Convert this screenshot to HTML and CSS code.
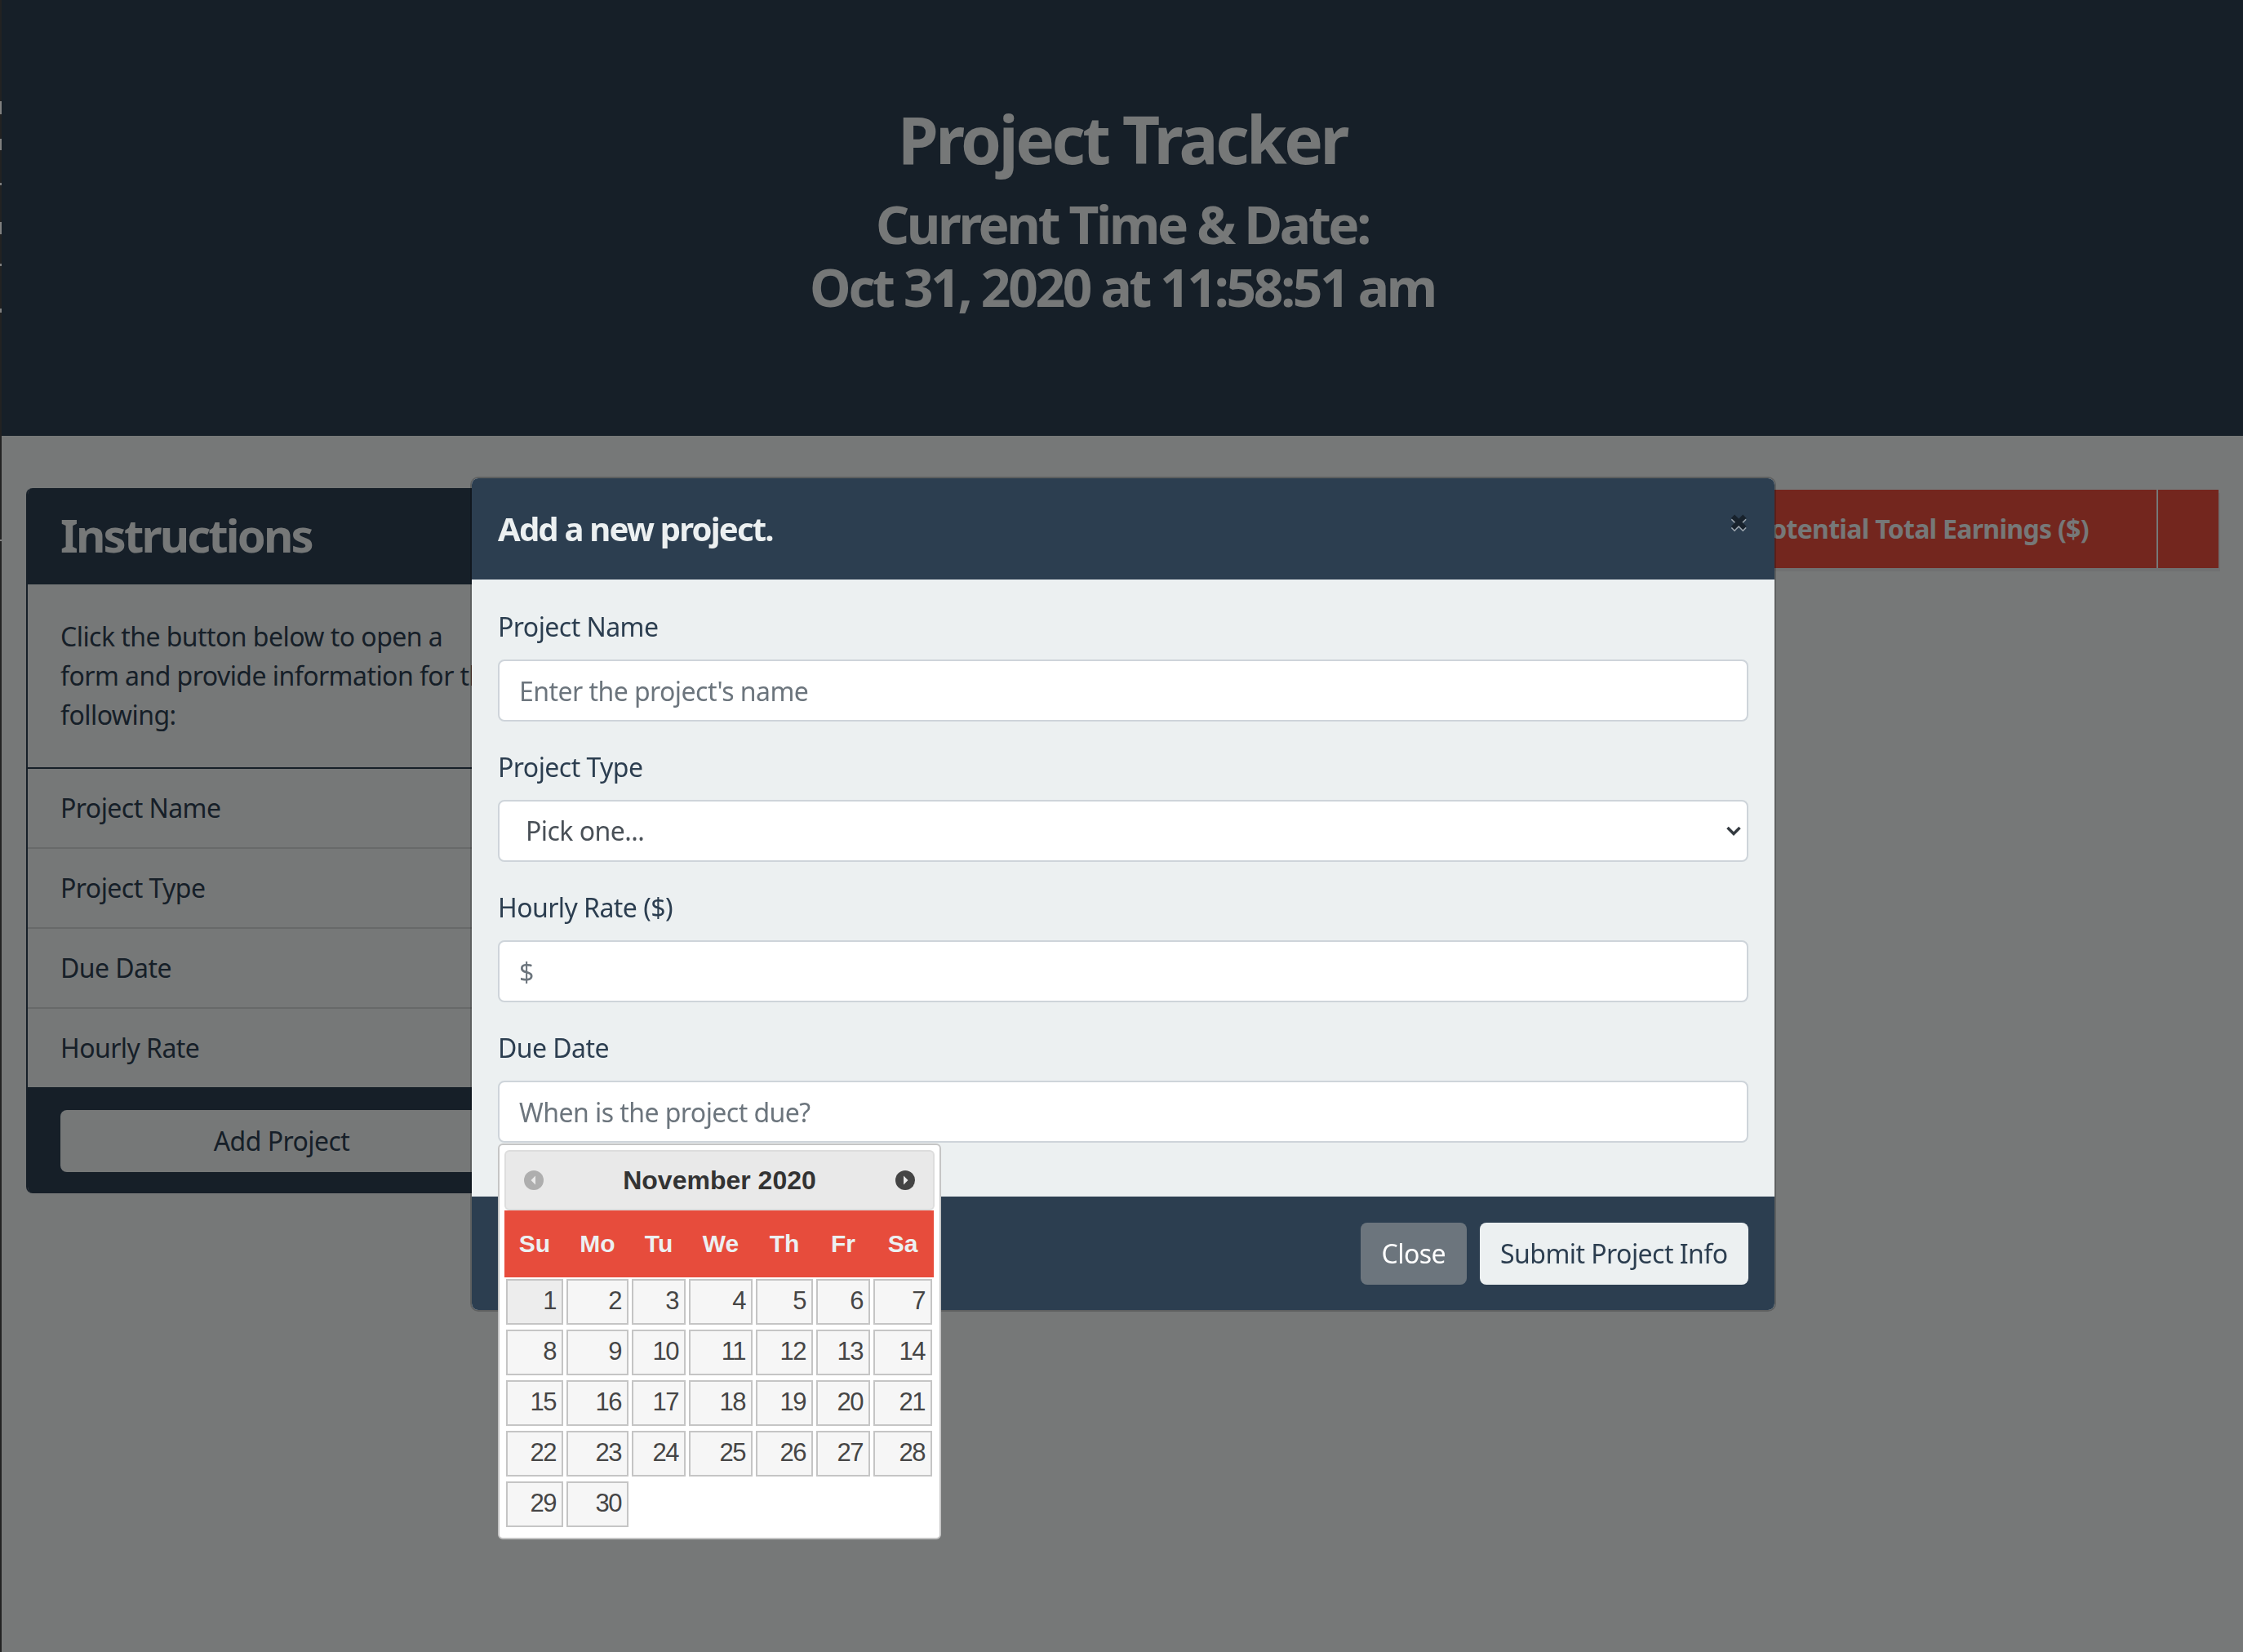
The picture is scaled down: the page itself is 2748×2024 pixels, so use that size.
FILE: index.html
```html
<!DOCTYPE html>
<html lang="en">
<head>
    <meta charset="UTF-8">
    <meta name="viewport" content="width=device-width, initial-scale=1.0">
    <title>Project Tracker</title>
    <link rel="stylesheet" href="styles.css">
</head>
<body>
    <div class="edge-strip">
        <svg width="2" height="700" viewBox="0 0 2 700">
            <rect y="124" width="2" height="16" fill="#fff"/>
            <rect y="170" width="2" height="14" fill="#fff"/>
            <rect y="224" width="2" height="3" fill="#fff"/>
            <rect y="272" width="2" height="15" fill="#fff"/>
            <rect y="323" width="2" height="3" fill="#fff"/>
            <rect y="378" width="2" height="5" fill="#fff"/>
            <rect y="661" width="2" height="2" fill="#fff"/>
        </svg>
    </div>

    <div class="page">
        <header class="banner">
            <h1>Project Tracker</h1>
            <h3>Current Time &amp; Date:<br>Oct 31, 2020 at 11:58:51 am</h3>
        </header>

        <main class="content">
            <section class="card">
                <h2 class="card-title">Instructions</h2>
                <p class="card-text">Click the button below to open a form and provide information for the following:</p>
                <ul class="card-list">
                    <li>Project Name</li>
                    <li>Project Type</li>
                    <li>Due Date</li>
                    <li>Hourly Rate</li>
                </ul>
                <div class="card-foot">
                    <button class="add-btn">Add Project</button>
                </div>
            </section>

            <table class="projects">
                <colgroup>
                    <col>
                    <col class="col-earn">
                    <col class="col-del">
                </colgroup>
                <thead>
                    <tr>
                        <th></th>
                        <th>Potential Total Earnings ($)</th>
                        <th></th>
                    </tr>
                </thead>
            </table>
        </main>
    </div>

    <div class="backdrop"></div>

    <div class="modal">
        <div class="modal-head">
            <h5>Add a new project.</h5>
            <button class="close-x">&#10006;</button>
        </div>

        <form class="modal-body">
            <div class="field">
                <label>Project Name</label>
                <input type="text" placeholder="Enter the project's name">
            </div>
            <div class="field field-select">
                <label>Project Type</label>
                <select>
                    <option>Pick one...</option>
                </select>
                <svg class="select-arrow" width="20" height="14" viewBox="0 0 20 14">
                    <path d="M2.500 3l7.500 7.500L17.500 3" fill="none" stroke="#343a40" stroke-width="3.500"/>
                </svg>
            </div>
            <div class="field">
                <label>Hourly Rate ($)</label>
                <input type="text" placeholder="$">
            </div>
            <div class="field field-date">
                <label>Due Date</label>
                <input type="text" placeholder="When is the project due?">

                <div class="datepicker">
                    <div class="dp-title">
                        <svg class="dp-arrow dp-prev" width="24" height="24" viewBox="0 0 24 24">
                            <circle cx="12" cy="12" r="12"/>
                            <path d="M14 6.500v11L8.500 12z"/>
                        </svg>
                        <span>November 2020</span>
                        <svg class="dp-arrow" width="24" height="24" viewBox="0 0 24 24">
                            <circle cx="12" cy="12" r="12"/>
                            <path d="M10 6.500v11l5.500-5.500z"/>
                        </svg>
                    </div>
                    <div class="dp-days">
                        <span>Su</span><span>Mo</span><span>Tu</span><span>We</span><span>Th</span><span>Fr</span><span>Sa</span>
                    </div>
                    <div class="dp-grid">
                        <a class="today">1</a><a>2</a><a>3</a><a>4</a><a>5</a><a>6</a><a>7</a>
                        <a>8</a><a>9</a><a>10</a><a>11</a><a>12</a><a>13</a><a>14</a>
                        <a>15</a><a>16</a><a>17</a><a>18</a><a>19</a><a>20</a><a>21</a>
                        <a>22</a><a>23</a><a>24</a><a>25</a><a>26</a><a>27</a><a>28</a>
                        <a>29</a><a>30</a>
                    </div>
                </div>
            </div>
        </form>

        <div class="modal-foot">
            <button class="btn-close">Close</button>
            <button class="btn-submit">Submit Project Info</button>
        </div>
    </div>
</body>
</html>
```

FILE: styles.css
```css
* {
    box-sizing: border-box;
}

html, body {
    height: 100%;
}

body {
    margin: 0;
    display: flex;
    background-color: #ecf0f1;
    color: #2c3e50;
    font-family: "Noto Sans", sans-serif;
    font-size: 32px;
    line-height: 48px;
    letter-spacing: -0.55px;
    overflow: hidden;
}

.edge-strip {
    width: 2px;
    flex-shrink: 0;
    background-color: #444;
}

.edge-strip svg {
    display: block;
}

.page {
    flex: 1;
    min-width: 0;
}

/* top banner */
.banner {
    height: 534px;
    padding-top: 122px;
    background-color: #2c3e50;
    color: #ecf0f1;
    text-align: center;
}

.banner h1 {
    margin: 0 0 18px;
    font-size: 80px;
    line-height: 96px;
    font-weight: 700;
    letter-spacing: -3.4px;
}

.banner h3 {
    margin: 0;
    font-size: 64px;
    line-height: 77px;
    font-weight: 700;
    letter-spacing: -3.3px;
}

.content {
    display: flex;
    align-items: flex-start;
    gap: 16px;
    padding: 64px 30px 0;
}

/* instructions card */
.card {
    width: 626px;
    flex-shrink: 0;
    border-left: 2px solid #2c3e50;
    border-radius: 8px;
    overflow: hidden;
}

.card-title {
    margin: 0 0 0 -2px;
    height: 118px;
    padding: 0 42px;
    background-color: #2c3e50;
    color: #ecf0f1;
    font-size: 56px;
    line-height: 114px;
    font-weight: 700;
    letter-spacing: -2.800px;
}

.card-text {
    margin: 0;
    padding: 40px;
    border-bottom: 2px solid #2c3e50;
}

.card-list {
    margin: 0;
    padding: 0;
    list-style: none;
}

.card-list li {
    padding: 24px 40px;
    border-bottom: 2px solid rgba(0, 0, 0, 0.125);
}

.card-list li:last-child {
    border-bottom: 0;
}

.card-foot {
    margin-left: -2px;
    padding: 28px 42px 26px;
    background-color: #2c3e50;
}

.add-btn {
    display: block;
    width: 100%;
    height: 76px;
    border: 0;
    border-radius: 8px;
    background-color: #ecf0f1;
    color: #2c3e50;
    font: inherit;
    letter-spacing: inherit;
}

/* table behind the modal */
.projects {
    flex: 1;
    table-layout: fixed;
    border-collapse: collapse;
    margin-top: 2px;
    box-shadow: 2px 4px 0 rgba(0, 0, 0, 0.05);
}

.col-earn {
    width: 516px;
}

.col-del {
    width: 75px;
}

.projects th {
    height: 96px;
    padding: 0 22px;
    background-color: #e74c3c;
    color: #ecf0f1;
    font-size: 32px;
    font-weight: 700;
    text-align: left;
    white-space: nowrap;
    overflow: hidden;
    letter-spacing: -0.700px;
    border-right: 2px solid #ecf0f1;
}

.projects th:last-child {
    border-right: 0;
}

/* modal */
.backdrop {
    position: fixed;
    inset: 0;
    background-color: rgba(0, 0, 0, 0.5);
}

.modal {
    position: fixed;
    top: 584px;
    left: 576px;
    width: 1600px;
    border: 2px solid rgba(0, 0, 0, 0.2);
    border-radius: 10px;
    background-clip: padding-box;
    background-color: #ecf0f1;
}

.modal-head {
    display: flex;
    align-items: center;
    justify-content: space-between;
    height: 124px;
    padding: 0 32px 0 32px;
    background-color: #2c3e50;
    border-radius: 8px 8px 0 0;
}

.modal-head h5 {
    margin: 0;
    color: #ecf0f1;
    font-size: 40px;
    line-height: 48px;
    font-weight: 700;
    letter-spacing: -1.800px;
}

.close-x {
    margin-top: -14px;
    padding: 0;
    border: 0;
    background: none;
    color: #18222c;
    font-family: "DejaVu Sans", sans-serif;
    font-size: 28px;
    line-height: 32px;
    text-shadow: 0 2px 0 rgba(236, 240, 241, 0.6);
}

.modal-body {
    padding: 34px 32px;
}

.field {
    position: relative;
    margin-bottom: 32px;
}

.field label {
    display: block;
    margin-bottom: 16px;
}

.field input,
.field select {
    display: block;
    width: 100%;
    height: 76px;
    padding: 0 24px;
    border: 2px solid #ced4da;
    border-radius: 8px;
    background-color: #fff;
    color: #495057;
    font: inherit;
    letter-spacing: inherit;
}

.field select {
    padding-left: 32px;
    appearance: none;
}

.select-arrow {
    position: absolute;
    right: 8px;
    bottom: 31px;
}

.field input::placeholder {
    color: #6c757d;
    opacity: 1;
}

/* date picker popup */
.datepicker {
    position: absolute;
    top: 100%;
    left: 0;
    margin-top: 1px;
    width: 543px;
    height: 485px;
    padding: 6px 6px 14px;
    border: 2px solid #c5c5c5;
    border-radius: 6px;
    background-color: #fff;
    font-family: "Liberation Sans", Arial, sans-serif;
    font-size: 30px;
    line-height: 36px;
    letter-spacing: 0;
}

.dp-title {
    display: flex;
    align-items: center;
    justify-content: space-between;
    height: 74px;
    padding: 0 22px;
    border: 2px solid #ddd;
    border-radius: 6px;
    background-color: #e9e9e9;
    color: #333;
    font-size: 32px;
    font-weight: 700;
}

.dp-arrow circle {
    fill: #444;
}

.dp-arrow path {
    fill: #e9e9e9;
}

.dp-prev {
    opacity: 0.35;
}

.dp-days,
.dp-grid {
    display: grid;
    grid-template-columns: 70px 76px 66px 78px 70px 66px 72px;
    column-gap: 4px;
}

.dp-days {
    height: 82px;
    padding: 0 2px;
    align-items: center;
    background-color: #e74c3c;
    color: #ecf0f1;
    font-weight: 700;
    text-align: center;
    width: 526px;
}

.dp-grid {
    row-gap: 6px;
    padding: 2px 2px 0;
}

.dp-grid a {
    height: 56px;
    padding: 7px 7px 0 0;
    border: 2px solid #c5c5c5;
    background-color: #f6f6f6;
    color: #454545;
    font-size: 31px;
    letter-spacing: -1.500px;
    text-align: right;
}

.dp-grid a.today {
    background-color: #ededed;
}

.modal-foot {
    display: flex;
    justify-content: flex-end;
    gap: 16px;
    height: 139px;
    padding: 32px 32px 0;
    background-color: #2c3e50;
    border-radius: 0 0 8px 8px;
}

.modal-foot button {
    height: 76px;
    padding: 0 25.500px;
    border: 0;
    border-radius: 8px;
    font: inherit;
    letter-spacing: inherit;
}

.btn-close {
    background-color: #6c757d;
    color: #fff;
}

.btn-submit {
    background-color: #ecf0f1;
    color: #2c3e50;
}
```
